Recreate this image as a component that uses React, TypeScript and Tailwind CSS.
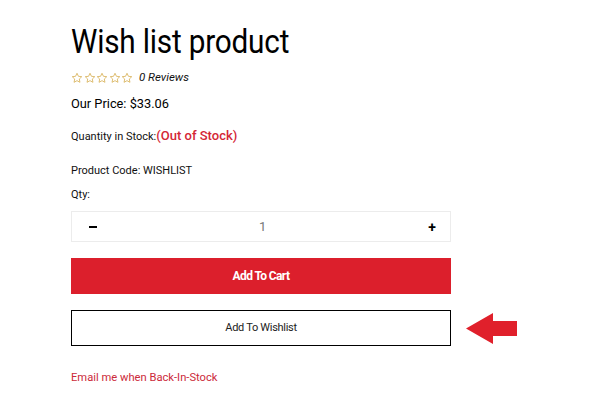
import React from "react";

function Star() {
  return (
    <svg width="12" height="12" viewBox="0 0 24 24" fill="none" stroke="#d8b25a" strokeWidth="1.7" strokeLinejoin="round">
      <path d="M12 2.5l2.9 6.1 6.6.8-4.9 4.6 1.3 6.6L12 17.3l-5.9 3.3 1.3-6.6-4.9-4.6 6.6-.8z" />
    </svg>
  );
}

export default function App() {
  return (
    <div className="w-[592px] h-[415px] bg-white" style={{ fontFamily: "Roboto, 'Liberation Sans', sans-serif" }}>
      <div className="pl-[71px] pt-[22px] w-[592px]">
        <div className="flex items-start">
          <h1 className="text-[33px] leading-[40px] text-black font-normal tracking-[-0.2px] scale-x-[0.9] origin-left">Wish list product</h1>
        </div>
        <div className="flex items-center mt-[9px] h-[14px]">
          <div className="flex gap-[0.5px]">
            <Star /><Star /><Star /><Star /><Star />
          </div>
          <span className="ml-[6px] text-[11.5px] italic text-[#111]">0 Reviews</span>
        </div>
        <div className="mt-[11px] text-[12.8px] leading-[16px] text-black">Our Price: $33.06</div>
        <div className="mt-[14px] flex items-baseline h-[18px]">
          <span className="text-[11px] text-[#111]">Quantity in Stock:</span>
          <span className="text-[13px] font-medium text-[#d42636]">(Out of Stock)</span>
        </div>
        <div className="mt-[19px] text-[11px] leading-[16px] text-[#111]">Product Code: WISHLIST</div>
        <div className="mt-[8px] text-[11px] leading-[16px] text-[#111]">Qty:</div>
        <div className="mt-[8px] w-[380px] h-[31px] border border-[#ececec] flex items-center justify-between px-[16px]">
          <span className="w-[8px] h-[2px] bg-black ml-[1px]"></span>
          <span className="text-[13px] text-[#777]">1</span>
          <span className="text-[14px] font-bold text-black leading-none mr-[-2px]">+</span>
        </div>
        <button className="mt-[16px] w-[380px] h-[36px] bg-[#dc1f2c] text-white text-[12px] font-bold tracking-[-0.6px] flex items-center justify-center">
          Add To Cart
        </button>
        <div className="mt-[16px] flex items-center">
          <button className="w-[380px] h-[36px] border border-black text-[11px] text-[#222] tracking-[-0.3px] flex items-center justify-center">
            Add To Wishlist
          </button>
          <svg className="ml-[15px]" width="52" height="31" viewBox="0 0 52 31">
            <path d="M0 15.5L27 0V8H51V23H27V31Z" fill="#e0202b" />
          </svg>
        </div>
        <div className="mt-[24px] text-[11.2px] text-[#cc2a3a]">Email me when Back-In-Stock</div>
      </div>
    </div>
  );
}
